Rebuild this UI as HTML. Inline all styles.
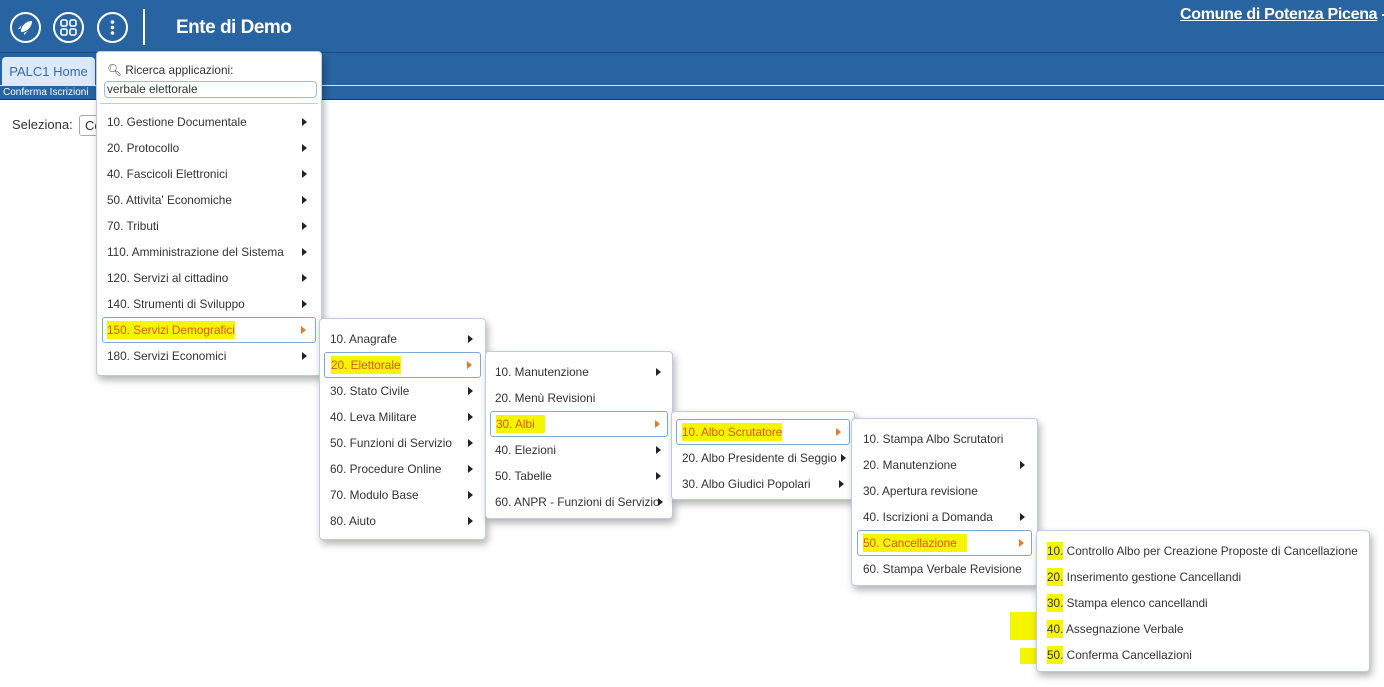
<!DOCTYPE html>
<html><head><meta charset="utf-8"><style>
*{box-sizing:border-box;margin:0;padding:0}
body{width:1384px;height:687px;position:relative;overflow:hidden;background:#fff;font-family:"Liberation Sans",sans-serif;font-size:11.8px;color:#333}
.hdr{position:absolute;left:0;top:0;width:1384px;height:53px;background:#2864a1;border-bottom:1px solid #1d4a78}
.bar{position:absolute;left:0;top:53px;width:1384px;height:33px;background:#2864a1;border-bottom:1px solid #d6e3f3}
.strip{position:absolute;left:0;top:86px;width:1384px;height:14px;background:#2864a1;border-bottom:1px solid #333;color:#fff;font-size:10px;line-height:14px;padding-left:3px}
.tab{position:absolute;left:2px;top:57px;width:93px;height:29px;background:#dce9fb;border-radius:4px 4px 0 0;color:#3a6aa8;font-size:13px;line-height:29px;text-align:center}
.ic{position:absolute;top:12px;width:31px;height:31px;border:2px solid #fff;border-radius:50%}
.m{position:absolute;background:#fff;border:1px solid #b9cde3;border-radius:4px;box-shadow:2px 4px 8px rgba(0,0,0,.3)}
.i{position:relative;height:26px;line-height:26px;white-space:nowrap}
.i .a{position:absolute;top:9px;width:0;height:0;border-top:4px solid transparent;border-bottom:4px solid transparent;border-left:5px solid #222}
.h{border:1px solid #7fa8d6;border-radius:3px;color:#e2561b}
.h .a{border-left-color:#e87a2a}
.y{background:#f5f500;padding:2px 0}
</style></head><body>
<div class="hdr"></div>
<div class="ic" style="left:10px"><svg width="27" height="27" viewBox="0 0 27 27"><path d="M9 18 C9 12 14 7 20 7 C20 13 15 18 9 18Z M8 15 L6 15 L10 11 Z M12 19 L12 21 L16 17Z" fill="#fff"/></svg></div>
<div class="ic" style="left:53px"><svg width="27" height="27" viewBox="0 0 27 27" fill="none" stroke="#fff" stroke-width="1.6"><rect x="6" y="6" width="6" height="6" rx="1.5"/><rect x="15" y="6" width="6" height="6" rx="1.5"/><rect x="6" y="15" width="6" height="6" rx="1.5"/><rect x="15" y="15" width="6" height="6" rx="1.5"/></svg></div>
<div class="ic" style="left:97px"><svg width="27" height="27" viewBox="0 0 27 27" fill="#fff"><circle cx="13.5" cy="8" r="1.8"/><circle cx="13.5" cy="13.5" r="1.8"/><circle cx="13.5" cy="19" r="1.8"/></svg></div>
<div style="position:absolute;left:143px;top:9px;width:2px;height:36px;background:#fff"></div>
<div style="position:absolute;left:176px;top:17px;color:#fff;font-weight:bold;font-size:19px;letter-spacing:-0.5px">Ente di Demo</div>
<div style="position:absolute;left:1180px;top:6px;color:#fff;font-weight:bold;font-size:16px;white-space:nowrap;letter-spacing:-0.3px"><u>Comune di Potenza Picena</u> -</div>
<div class="bar"></div>
<div class="tab">PALC1 Home</div>
<div class="strip">Conferma Iscrizioni</div>
<div style="position:absolute;left:12px;top:117px;font-size:13px">Seleziona:</div>
<div style="position:absolute;left:79px;top:115px;width:30px;height:21px;border:1px solid #aaa;border-radius:3px;font-size:13px;padding-left:5px;line-height:19px">Co</div>

<div style="position:absolute;left:1022px;top:565px;width:14px;height:15px;background:#f5f500"></div>
<div style="position:absolute;left:1010px;top:612px;width:26px;height:28px;background:#f5f500"></div>
<div style="position:absolute;left:1020px;top:648px;width:16px;height:16px;background:#f5f500"></div>

<div class="m" style="left:96px;top:51px;width:226px;height:325px">
 <div style="position:absolute;left:10px;top:11px;">&#128269;&#xFE0E; Ricerca applicazioni:</div>
 <div style="position:absolute;left:7px;top:29px;width:213px;height:17px;border:1px solid #9bbbe0;border-radius:4px;padding-left:2px;line-height:15px">verbale elettorale</div>
 <div style="position:absolute;left:3px;top:51px;width:218px;height:1px;background:#b9cde3"></div>
 <div style="position:absolute;left:0;top:57px;width:100%">
  <div class="i" style="padding-left:10px">10. Gestione Documentale<span class="a" style="right:14px"></span></div>
  <div class="i" style="padding-left:10px">20. Protocollo<span class="a" style="right:14px"></span></div>
  <div class="i" style="padding-left:10px">40. Fascicoli Elettronici<span class="a" style="right:14px"></span></div>
  <div class="i" style="padding-left:10px">50. Attivita' Economiche<span class="a" style="right:14px"></span></div>
  <div class="i" style="padding-left:10px">70. Tributi<span class="a" style="right:14px"></span></div>
  <div class="i" style="padding-left:10px">110. Amministrazione del Sistema<span class="a" style="right:14px"></span></div>
  <div class="i" style="padding-left:10px">120. Servizi al cittadino<span class="a" style="right:14px"></span></div>
  <div class="i" style="padding-left:10px">140. Strumenti di Sviluppo<span class="a" style="right:14px"></span></div>
  <div class="i h" style="margin:0 5px;padding-left:4px;line-height:24px"><span class="y">150. Servizi Demografici</span><span class="a" style="right:9px;top:8px"></span></div>
  <div class="i" style="padding-left:10px">180. Servizi Economici<span class="a" style="right:14px"></span></div>
 </div>
</div>

<div class="m" style="left:319px;top:318px;width:167px;height:222px;padding-top:7px">
  <div class="i" style="padding-left:10px">10. Anagrafe<span class="a" style="right:12px"></span></div>
  <div class="i h" style="margin:0 4px;padding-left:6px;line-height:24px"><span class="y">20. Elettorale</span><span class="a" style="right:8px;top:8px"></span></div>
  <div class="i" style="padding-left:10px">30. Stato Civile<span class="a" style="right:12px"></span></div>
  <div class="i" style="padding-left:10px">40. Leva Militare<span class="a" style="right:12px"></span></div>
  <div class="i" style="padding-left:10px">50. Funzioni di Servizio<span class="a" style="right:12px"></span></div>
  <div class="i" style="padding-left:10px">60. Procedure Online<span class="a" style="right:12px"></span></div>
  <div class="i" style="padding-left:10px">70. Modulo Base<span class="a" style="right:12px"></span></div>
  <div class="i" style="padding-left:10px">80. Aiuto<span class="a" style="right:12px"></span></div>
</div>

<div class="m" style="left:485px;top:351px;width:188px;height:168px;padding-top:7px">
  <div class="i" style="padding-left:9px">10. Manutenzione<span class="a" style="right:11px"></span></div>
  <div class="i" style="padding-left:9px">20. Menù Revisioni</div>
  <div class="i h" style="margin:0 4px;padding-left:5px;line-height:24px"><span class="y">30. Albi&nbsp;&nbsp;&nbsp;</span><span class="a" style="right:7px;top:8px"></span></div>
  <div class="i" style="padding-left:9px">40. Elezioni<span class="a" style="right:11px"></span></div>
  <div class="i" style="padding-left:9px">50. Tabelle<span class="a" style="right:11px"></span></div>
  <div class="i" style="padding-left:9px">60. ANPR - Funzioni di Servizio<span class="a" style="right:9px"></span></div>
</div>

<div class="m" style="left:671px;top:411px;width:184px;height:89px;padding-top:7px">
  <div class="i h" style="margin:0 4px;padding-left:5px;line-height:24px"><span class="y">10. Albo Scrutatore</span><span class="a" style="right:8px;top:8px"></span></div>
  <div class="i" style="padding-left:10px">20. Albo Presidente di Seggio<span class="a" style="right:8px"></span></div>
  <div class="i" style="padding-left:10px">30. Albo Giudici Popolari<span class="a" style="right:10px"></span></div>
</div>

<div class="m" style="left:851px;top:418px;width:187px;height:168px;padding-top:7px">
  <div class="i" style="padding-left:11px">10. Stampa Albo Scrutatori</div>
  <div class="i" style="padding-left:11px">20. Manutenzione<span class="a" style="right:12px"></span></div>
  <div class="i" style="padding-left:11px">30. Apertura revisione</div>
  <div class="i" style="padding-left:11px">40. Iscrizioni a Domanda<span class="a" style="right:12px"></span></div>
  <div class="i h" style="margin:0 5px;padding-left:5px;line-height:24px"><span class="y">50. Cancellazione&nbsp;&nbsp;&nbsp;</span><span class="a" style="right:7px;top:8px"></span></div>
  <div class="i" style="padding-left:11px">60. Stampa Verbale Revisione</div>
</div>

<div class="m" style="left:1036px;top:530px;width:334px;height:142px;padding-top:7px">
  <div class="i" style="padding-left:10px"><span class="y">10.</span> Controllo Albo per Creazione Proposte di Cancellazione</div>
  <div class="i" style="padding-left:10px"><span class="y">20.</span> Inserimento gestione Cancellandi</div>
  <div class="i" style="padding-left:10px"><span class="y">30.</span> Stampa elenco cancellandi</div>
  <div class="i" style="padding-left:10px"><span class="y">40.</span> Assegnazione Verbale</div>
  <div class="i" style="padding-left:10px"><span class="y">50.</span> Conferma Cancellazioni</div>
</div>
</body></html>
